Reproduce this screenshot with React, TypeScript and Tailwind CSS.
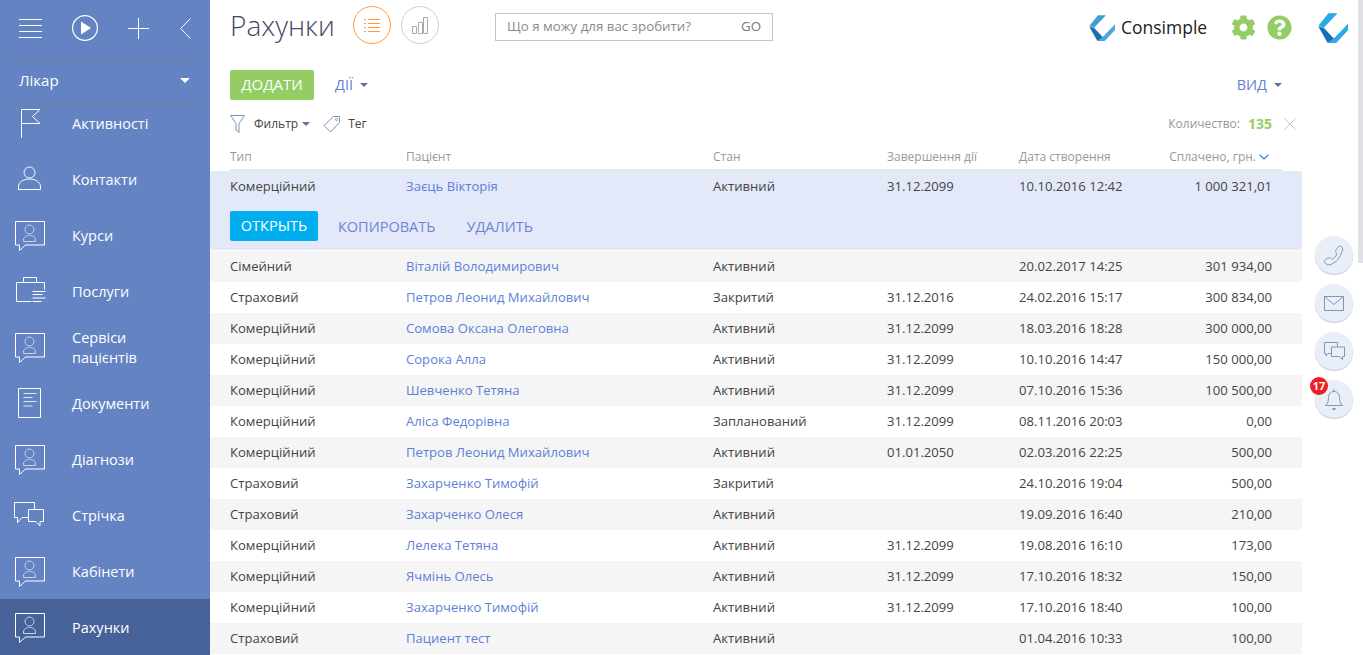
import React from 'react'
import { ChevronDown } from 'lucide-react'
import { FaCog, FaQuestionCircle } from 'react-icons/fa'

const font = "font-['Open_Sans','Noto_Sans',sans-serif]"

const ChatPerson = () => (
  <svg width="46" height="34" viewBox="0 0 46 34" fill="none" stroke="#fff">
    <path d="M1.500 3.500h29V27H11.500L5.500 32.500V27h-4z" />
    <circle cx="15.500" cy="11.500" r="4.500" stroke="#c5d2ec" />
    <path d="M9.500 23.500v-1.500c0-3 3-4.500 6-4.500s6 1.500 6 4.500v1.500z" stroke="#c5d2ec" />
  </svg>
)

const icons: Record<string, React.ReactNode> = {
  flag: (
    <svg width="46" height="34" viewBox="0 0 46 34" fill="none" stroke="#fff">
      <path d="M7.500 32V3.500H26L18.500 10.500 26 17.500H7.500" />
    </svg>
  ),
  person: (
    <svg width="46" height="34" viewBox="0 0 46 34" fill="none" stroke="#fff">
      <circle cx="15.500" cy="10.500" r="5.500" />
      <path d="M4.500 27.500v-3c0-4.500 5-7.500 11-7.500s11 3 11 7.500v3z" />
    </svg>
  ),
  chat: <ChatPerson />,
  case: (
    <svg width="46" height="34" viewBox="0 0 46 34" fill="none" stroke="#fff">
      <path d="M9.500 8.500v-5h13v5M2.500 8.500h28v7M2.500 8.500v19h15" />
      <path d="M18.500 17.500h13M18.500 20.500h10M18.500 24h13M18.500 27.500h9" />
    </svg>
  ),
  doc: (
    <svg width="46" height="34" viewBox="0 0 46 34" fill="none" stroke="#fff">
      <path d="M4.500 2.500h22v29h-22z" />
      <path d="M9.500 7.500h13M9.500 11.500h9M9.500 15.500h13M9.500 20h9" stroke="#dfe6f5" />
    </svg>
  ),
  feed: (
    <svg width="46" height="34" viewBox="0 0 46 34" fill="none" stroke="#fff">
      <path d="M14.500 19.500H8L3.500 24.500v-5h-3v-15h20v7" />
      <path d="M14.500 11.500h15v12H26V28l-4-4.500h-7.500z" />
    </svg>
  ),
}

const navItems = [
  { label: 'Активності', icon: 'flag' },
  { label: 'Контакти', icon: 'person' },
  { label: 'Курси', icon: 'chat' },
  { label: 'Послуги', icon: 'case' },
  { label: 'Сервіси пацієнтів', icon: 'chat' },
  { label: 'Документи', icon: 'doc' },
  { label: 'Діагнози', icon: 'chat' },
  { label: 'Стрічка', icon: 'feed' },
  { label: 'Кабінети', icon: 'chat' },
  { label: 'Рахунки', icon: 'chat', active: true },
]

const rows = [
  ['Сімейний', 'Віталій Володимирович', 'Активний', '', '20.02.2017 14:25', '301 934,00'],
  ['Страховий', 'Петров Леонид Михайлович', 'Закритий', '31.12.2016', '24.02.2016 15:17', '300 834,00'],
  ['Комерційний', 'Сомова Оксана Олеговна', 'Активний', '31.12.2099', '18.03.2016 18:28', '300 000,00'],
  ['Комерційний', 'Сорока Алла', 'Активний', '31.12.2099', '10.10.2016 14:47', '150 000,00'],
  ['Комерційний', 'Шевченко Тетяна', 'Активний', '31.12.2099', '07.10.2016 15:36', '100 500,00'],
  ['Комерційний', 'Аліса Федорівна', 'Запланований', '31.12.2099', '08.11.2016 20:03', '0,00'],
  ['Комерційний', 'Петров Леонид Михайлович', 'Активний', '01.01.2050', '02.03.2016 22:25', '500,00'],
  ['Страховий', 'Захарченко Тимофій', 'Закритий', '', '24.10.2016 19:04', '500,00'],
  ['Страховий', 'Захарченко Олеся', 'Активний', '', '19.09.2016 16:40', '210,00'],
  ['Комерційний', 'Лелека Тетяна', 'Активний', '31.12.2099', '19.08.2016 16:10', '173,00'],
  ['Комерційний', 'Ячмінь Олесь', 'Активний', '31.12.2099', '17.10.2016 18:32', '150,00'],
  ['Комерційний', 'Захарченко Тимофій', 'Активний', '31.12.2099', '17.10.2016 18:40', '100,00'],
  ['Страховий', 'Пациент тест', 'Активний', '', '01.04.2016 10:33', '100,00'],
]

const cols = 'grid grid-cols-[176px_307px_174px_132px_1fr]'

const Caret = () => (
  <span className="inline-block w-0 h-0 border-x-[4px] border-x-transparent border-t-[4px] border-t-[#5f7299]" />
)

const Logo = ({ size, a, b, c }: { size: number; a: string; b: string; c: string }) => (
  <svg width={size} height={size} viewBox="0 0 26 26">
    <path d="M9 .300h8L5 12.700.300 11z" fill={a} />
    <path d="M.300 11.700L5 12.700 13.700 22 16 25.700H8.300z" fill={b} />
    <path d="M8.300 25.700H16L26 15V9.300L13.700 22z" fill={c} />
  </svg>
)

const Sidebar = () => (
  <aside className="w-[210px] shrink-0 h-full bg-[#6483c2] text-white flex flex-col">
    <div className="h-[59px] shrink-0 flex items-center pl-[19px] pb-[3px]">
      <svg width="23" height="19" viewBox="0 0 23 19" stroke="#fff" fill="none">
        <path d="M0 .500h23M0 6.500h23M0 12.500h23M0 18.500h23" />
      </svg>
      <svg width="26" height="26" viewBox="0 0 26 26" fill="none" className="ml-[30px]">
        <circle cx="13" cy="13" r="12.400" stroke="#fff" strokeWidth="1.200" />
        <path d="M9 6.500l10 6.500-10 6.500z" fill="#fff" />
      </svg>
      <svg width="21" height="21" viewBox="0 0 21 21" stroke="#fff" fill="none" className="ml-[30px]">
        <path d="M10.500 0v21M0 10.500h21" />
      </svg>
      <svg width="11" height="21" viewBox="0 0 11 21" stroke="#fff" fill="none" className="ml-[31px]">
        <path d="M10.500 .500L.700 10.500l9.800 10" />
      </svg>
    </div>
    <div className="mx-[10px] h-[44px] shrink-0 border-y border-[#7a7f8c] flex items-center justify-between pl-[9px] pr-[10px] pb-[2px] text-[15px]">
      <span>Лікар</span>
      <span className="inline-block w-0 h-0 border-x-[5px] border-x-transparent border-t-[5px] border-t-white" />
    </div>
    <nav className="flex-1 overflow-hidden">
      <div className="-mt-[8px]">
        {navItems.map((item) => (
          <div
            key={item.label}
            className={`h-[56px] flex items-center pl-[14px] ${item.active ? 'bg-[#476299]' : ''}`}
          >
            <span className="w-[58px] shrink-0 flex">{icons[item.icon]}</span>
            <span className="w-[100px] mt-[2px] text-[14.5px] leading-[20px] font-medium">{item.label}</span>
          </div>
        ))}
      </div>
    </nav>
  </aside>
)

const Toolbar = () => (
  <>
    <header className="h-[59px] flex items-center pl-[20px] pr-[15px]">
      <h1 className="text-[28px] font-light text-[#444b63] w-[123px] leading-none -mt-[10px]">Рахунки</h1>
      <span className="w-[38px] h-[38px] rounded-full border border-[#ff9a3d] flex items-center justify-center -mt-[9px]">
        <svg width="16" height="14" viewBox="0 0 16 14" stroke="#ff9a3d" fill="none">
          <path d="M0 1.500h2M4 1.500h12M0 5.500h2M4 5.500h12M0 9.500h2M4 9.500h12M0 13.500h2M4 13.500h12" />
        </svg>
      </span>
      <span className="ml-[10px] w-[38px] h-[38px] rounded-full border border-[#cfcfcf] flex items-center justify-center -mt-[9px]">
        <svg width="16" height="17" viewBox="0 0 16 17" stroke="#a9a9a9" fill="none">
          <path d="M.500 9.500h4v7h-4zM6.500 5.500h4v11h-4zM11.500 .500h4v16h-4z" />
        </svg>
      </span>
      <div className="ml-[56px] w-[278px] h-[28px] border border-[#c6c6c6] flex items-center justify-between px-[11px] text-[13.3px] text-[#8a8a8a] -mt-[5px]">
        <span>Що я можу для вас зробити?</span>
        <span className="text-[#777]">GO</span>
      </div>
      <div className="ml-auto flex items-center -mt-[4px]">
        <Logo size={26} a="#3d9fd8" b="#1e6fad" c="#47a8dc" />
        <span className="ml-[6px] text-[17.5px] text-[#222] w-[110px]">Consimple</span>
        <FaCog size={25} color="#93cd63" />
        <FaQuestionCircle size={25} color="#93cd63" className="ml-[11px]" />
        <span className="ml-[26px] flex"><Logo size={30} a="#29a9e6" b="#1b6fb5" c="#2caae5" /></span>
      </div>
    </header>
    <div className="h-[51px] flex items-center pl-[20px] pr-[81px]">
      <button className="w-[84px] h-[30px] rounded-[2px] bg-[#93cd63] text-white text-[15px]">ДОДАТИ</button>
      <span className="ml-[21px] text-[#5f7fd8] text-[14.5px] flex items-center gap-[7px]">ДІЇ <Caret /></span>
      <span className="ml-auto text-[#5f7fd8] text-[14.5px] flex items-center gap-[7px]">ВИД <Caret /></span>
    </div>
    <div className="h-[26px] flex items-center pl-[20px] pr-[67px] pt-[1px] text-[12px] text-[#444]">
      <svg width="15" height="18" viewBox="0 0 15 18" fill="none" stroke="#7d90b5">
        <path d="M.500 .500h14l-5.500 8v9l-3-2.500v-6.500z" />
      </svg>
      <span className="ml-[9px]">Фильтр</span>
      <span className="ml-[4px] flex"><Caret /></span>
      <svg width="18" height="18" viewBox="0 0 18 18" fill="none" stroke="#7d90b5" className="ml-[13px]">
        <path d="M10.500 1.500h6v6l-9 9.500-6.500-6.500z" />
        <circle cx="13.500" cy="4.500" r="1" />
      </svg>
      <span className="ml-[7px]">Тег</span>
      <span className="ml-auto text-[#999]">Количество:</span>
      <span className="ml-[8px] text-[#93cd63] font-bold text-[14px]">135</span>
      <svg width="12" height="12" viewBox="0 0 12 12" stroke="#c4c4c4" fill="none" className="ml-[12px]">
        <path d="M.500 .500l11 11M11.500 .500l-11 11" />
      </svg>
    </div>
  </>
)

const RoundButton = ({ children, badge }: { children: React.ReactNode; badge?: string }) => (
  <div className="relative w-[38px] h-[38px] rounded-full bg-[#eaeef6] shadow-[0_1px_1px_#c5c9d3] flex items-center justify-center">
    {children}
    {badge && (
      <span className="absolute -left-[5px] -top-[3px] w-[18px] h-[18px] rounded-full bg-[#ee1c25] text-white text-[11px] font-bold flex items-center justify-center">
        {badge}
      </span>
    )}
  </div>
)

const Table = () => (
  <div className="w-[1092px] shrink-0 text-[13.1px] text-[#444]">
    <div className={`${cols} mx-[20px] h-[35px] pt-[9px] items-center text-[12px] text-[#999] border-b-2 border-[#e4e6ea]`}>
      <span>Тип</span>
      <span>Пацієнт</span>
      <span>Стан</span>
      <span>Завершення дії</span>
      <span className="flex justify-end items-center pr-[10px]">
        <span className="mr-auto">Дата створення</span>
        Сплачено, грн.
        <ChevronDown size={16} strokeWidth={1.75} className="text-[#3f7cc0]" />
      </span>
    </div>
    <div className="bg-[#e3e9f8] h-[79px] mb-px">
      <div className={`${cols} pl-[20px] pr-[30px] h-[31px] items-center`}>
        <span>Комерційний</span>
        <span className="text-[#5f7fd8]">Заєць Вікторія</span>
        <span>Активний</span>
        <span>31.12.2099</span>
        <span className="flex justify-between">
          <span>10.10.2016 12:42</span>
          <span>1 000 321,01</span>
        </span>
      </div>
      <div className="pl-[20px] pt-[9px] flex items-center text-[14.5px] text-[#6e83d6]">
        <button className="w-[88px] h-[30px] rounded-[2px] bg-[#00aeef] text-white">ОТКРЫТЬ</button>
        <span className="ml-[20px] mt-[2px]">КОПИРОВАТЬ</span>
        <span className="ml-[31px] mt-[2px]">УДАЛИТЬ</span>
      </div>
    </div>
    {rows.map((row, i) => (
      <div
        key={i}
        className={`${cols} pl-[20px] pr-[30px] h-[31px] items-center ${i % 2 === 0 ? 'bg-[#f5f5f5]' : 'bg-white'}`}
      >
        <span>{row[0]}</span>
        <span className="text-[#5f7fd8]">{row[1]}</span>
        <span>{row[2]}</span>
        <span>{row[3]}</span>
        <span className="flex justify-between">
          <span>{row[4]}</span>
          <span>{row[5]}</span>
        </span>
      </div>
    ))}
  </div>
)

export default function App() {
  return (
    <div className={`${font} relative w-[1363px] h-[655px] overflow-hidden flex bg-white`}>
      <Sidebar />
      <main className="flex-1 h-full overflow-hidden">
        <Toolbar />
        <div className="flex">
          <Table />
          <div className="pt-[100px] pl-[13px] flex flex-col gap-[10px]">
            <RoundButton>
              <svg width="20" height="21" viewBox="0 0 20 20" fill="none" stroke="#8295b8">
                <path d="M1 17c-1-2 0-3 2-4 2-1 3-1 4 0l1 1c2-1 4-3 5-6l-1-1c-1-1 0-3 1-4 1-2 2-3 4-2 2 1 2 3 1 5-2 6-5 10-11 13-3 1-5 0-6-2z" />
              </svg>
            </RoundButton>
            <RoundButton>
              <svg width="20" height="15" viewBox="0 0 20 15" fill="none" stroke="#8295b8">
                <path d="M.500 .500h19v14h-19zM.500 .500l9.500 8 9.500-8" />
              </svg>
            </RoundButton>
            <RoundButton>
              <svg width="21" height="18" viewBox="0 0 21 18" fill="none" stroke="#8295b8">
                <path d="M7 11.500H4l-2 2.500v-2.500H.500v-11h13v4" />
                <path d="M7.500 5h13v9.500h-2v3l-3-3h-8z" />
              </svg>
            </RoundButton>
            <RoundButton badge="17">
              <svg width="18" height="21" viewBox="0 0 18 21" fill="none" stroke="#8295b8">
                <path d="M.500 16.500c2-2 3-4 3-8 0-4 2.500-6 5.500-6s5.500 2 5.500 6c0 4 1 6 3 8zM9 0v2.500" />
                <path d="M7.500 20h3" strokeWidth="2" />
              </svg>
            </RoundButton>
          </div>
        </div>
      </main>
      <div className="absolute right-0 top-0 w-[5px] h-[263px] bg-[#e0e1e7]" />
    </div>
  )
}
